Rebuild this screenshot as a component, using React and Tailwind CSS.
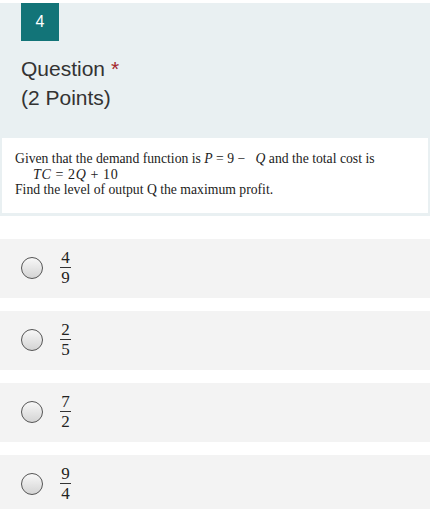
import React from 'react';

const options = [
  ['4', '9'],
  ['2', '5'],
  ['7', '2'],
  ['9', '4'],
];

function Fraction({ num, den }) {
  return (
    <span className="inline-flex flex-col items-center text-[17px] leading-[16px] text-[#222]" style={{ fontFamily: '"Liberation Serif", serif' }}>
      <span className="px-[1px]">{num}</span>
      <span className="mt-[1px] block h-px w-[11px] bg-[#333]" />
      <span className="px-[1px] pt-[2px]">{den}</span>
    </span>
  );
}

export default function App() {
  return (
    <div className="w-[430px] h-[509px] overflow-hidden bg-white" style={{ fontFamily: '"Liberation Sans", Arial, sans-serif' }}>
      <div className="h-[3px] bg-white" />
      {/* header panel */}
      <div className="bg-[#e9f0f2] pb-[3px]">
        <div className="px-[21px]">
          <div className="flex h-[38px] w-[38px] items-center justify-center bg-[#127478] text-[16px] text-white">4</div>
          <div className="pt-[13px] pb-[26px] text-[21px] leading-[29px] text-[#333]">
            <div>
              Question <span className="text-[#a4262c]">*</span>
            </div>
            <div>(2 Points)</div>
          </div>
        </div>
        <div className="mx-[2px] bg-white px-[13px] pt-[13px] pb-[15px] text-[13.7px] leading-[15.5px] text-[#222]" style={{ fontFamily: '"Liberation Serif", "Times New Roman", serif' }}>
          <div>
            Given that the demand function is <i>P</i> = 9 −&nbsp;&nbsp; <i>Q</i> and the total cost is
          </div>
          <div className="pl-[18px] tracking-[0.6px] text-[14px]">
            <i>TC</i> = 2<i>Q</i> + 10
          </div>
          <div>Find the level of output Q the maximum profit.</div>
        </div>
      </div>

      {/* options */}
      <div className="flex flex-col gap-[13px] pt-[23px]">
        {options.map(([n, d], i) => (
          <div key={i} className="flex h-[59px] items-center gap-[17px] bg-[#f3f3f3] pl-[21px]">
            <span className="h-[22px] w-[22px] rounded-full border-[1.5px] border-[#555] bg-gradient-to-b from-[#f8f8f8] to-[#d4d4d4]" />
            <Fraction num={n} den={d} />
          </div>
        ))}
      </div>
    </div>
  );
}
